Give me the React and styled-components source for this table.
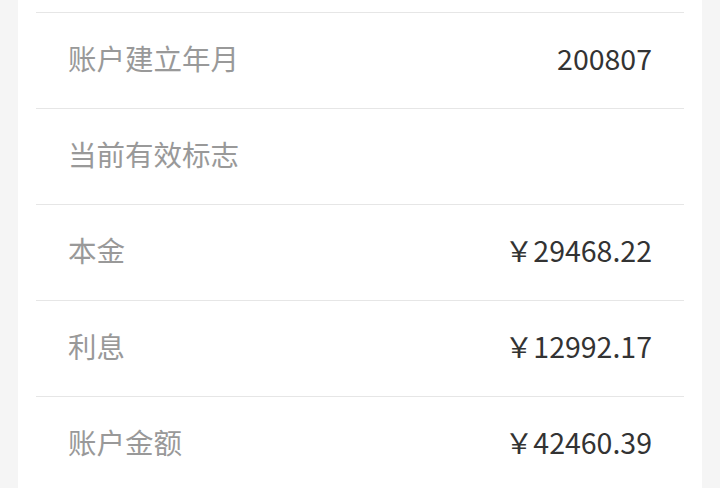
import React from "react";
import styled, { createGlobalStyle } from "styled-components";

const GlobalStyle = createGlobalStyle`
  html, body {
    margin: 0;
    padding: 0;
    background: #f5f5f5;
    overflow: hidden;
  }
  body {
    font-family: "Noto Sans CJK SC", "Noto Sans", sans-serif;
  }
`;

const rows = [
  { label: "账户建立年月", value: "200807" },
  { label: "当前有效标志", value: "" },
  { label: "本金", value: "￥29468.22" },
  { label: "利息", value: "￥12992.17" },
  { label: "账户金额", value: "￥42460.39" },
];

export default function App() {
  return (
    <Page>
      <GlobalStyle />
      <Card>
        {rows.map((r) => (
          <Row key={r.label}>
            <Label>{r.label}</Label>
            <Value>{r.value}</Value>
          </Row>
        ))}
      </Card>
    </Page>
  );
}

const Page = styled.div`
  height: 488px;
  overflow: hidden;
  padding: 0 18px;
`;

const Card = styled.div`
  background: #fff;
  min-height: 488px;
  padding: 12px 18px 0;
  box-sizing: border-box;
`;

const Row = styled.div`
  height: 95px;
  border-top: 1px solid #e6e6e6;
  display: flex;
  align-items: center;
  justify-content: space-between;
  padding: 0 32px 6px;
  box-sizing: content-box;
  height: 89px;
  font-size: 28.5px;
`;

const Label = styled.span`
  color: #999;
`;

const Value = styled.span`
  color: #333;
`;
